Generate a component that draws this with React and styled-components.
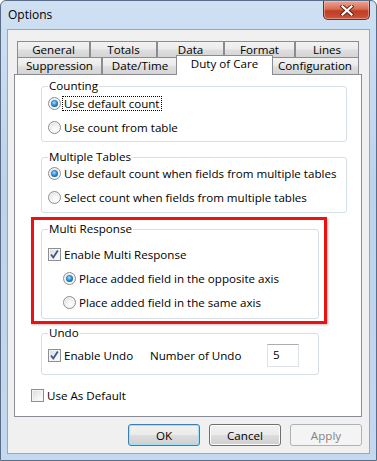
import React from "react";
import styled, { createGlobalStyle, css } from "styled-components";

const FS = "11.6px";

const GlobalStyle = createGlobalStyle`
  html, body { margin: 0; padding: 0; background: #ffffff; }
  body {
    font-family: "Segoe UI", "Open Sans", "Noto Sans", sans-serif;
    font-size: ${FS};
    color: #000;
  }
  * { box-sizing: border-box; }
`;

const Window = styled.div`
  width: 377px;
  height: 461px;
  border: 1px solid #5b6d86;
  border-radius: 6px 6px 0 0;
  background: linear-gradient(to bottom, #cfe0f3 0%, #bdd3ec 40%, #c4d8ef 100%);
  padding: 0 6px 6px 6px;
  display: flex;
  flex-direction: column;
`;

const TitleBar = styled.div`
  height: 28px;
  display: flex;
  align-items: flex-start;
  justify-content: space-between;
`;

const Title = styled.div`
  margin-top: 6px;
  padding-left: 1px;
  font-size: 12px;
  line-height: 16px;
  color: #000;
`;

const CloseButton = styled.div`
  width: 47px;
  height: 19px;
  border: 1px solid #6a2c22;
  border-top: none;
  border-radius: 0 0 5px 5px;
  background: linear-gradient(to bottom, #eaa694 0%, #d86c55 45%, #c13b22 55%, #c8573b 100%);
  box-shadow: inset 0 0 0 1px rgba(255, 210, 200, 0.45);
  display: flex;
  align-items: center;
  justify-content: center;
`;

const Client = styled.div`
  flex: 1;
  border: 1px solid #93a8c3;
  background: #f0f0f0;
  padding: 11px 0 0 6px;
`;

const TabArea = styled.div`
  width: 348px;
  display: flex;
  flex-direction: column;
`;

const TabRow = styled.div`
  display: flex;
  padding: 0 3px;
  height: ${(p) => p.$h}px;
`;

const Tab = styled.div`
  width: ${(p) => p.$w}px;
  height: 100%;
  border: 1px solid #898c95;
  border-bottom: none;
  background: linear-gradient(to bottom, #f3f3f3 0%, #ebebeb 45%, #dedede 55%, #d4d4d4 100%);
  display: flex;
  align-items: center;
  justify-content: center;
  font-size: ${FS};
  line-height: 14px;
  white-space: nowrap;
  ${(p) =>
    p.$selected &&
    css`
      position: relative;
      z-index: 1;
      width: ${p.$w + 4}px;
      height: calc(100% + 3px);
      margin: -2px -2px -1px -2px;
      background: #ffffff;
      align-items: flex-start;
      padding-top: 1px;
    `}
`;

const Panel = styled.div`
  height: 343px;
  border: 1px solid #898c95;
  background: #ffffff;
  display: flex;
  flex-direction: column;
  align-items: flex-start;
`;

const GroupBox = styled.fieldset`
  width: ${(p) => p.$w}px;
  margin: ${(p) => p.$mt || 0}px 0 0 ${(p) => p.$ml || 0}px;
  padding: ${(p) => p.$pt}px 6px ${(p) => p.$pb}px 6px;
  border: 1px solid #d5dfe5;
  border-radius: 3px;
  display: flex;
  flex-direction: column;
  gap: 8px;
  min-width: 0;
`;

const Legend = styled.legend`
  padding: 0 1px;
  margin: 0;
  font-size: ${FS};
  line-height: 14px;
`;

const OptionRow = styled.div`
  display: flex;
  align-items: center;
  height: ${(p) => p.$h || 16}px;
  margin-left: ${(p) => p.$indent || 0}px;
  font-size: ${FS};
  white-space: nowrap;
`;

const StandaloneRow = styled(OptionRow)`
  margin-top: 12px;
  margin-left: 16px;
`;

const Cell = styled.div`
  width: ${(p) => p.$w}px;
  flex: none;
  display: flex;
  align-items: center;
`;

const RadioMark = styled.span`
  position: relative;
  flex: none;
  width: 13px;
  height: 13px;
  border-radius: 50%;
  border: 1px solid #8d8d8d;
  background: radial-gradient(circle at 60% 65%, #ffffff 0%, #f2f2f2 40%, #d6d6d6 100%);
  box-shadow: inset 0 0 0 1px #f8f8f8;
  margin-right: 2px;
  ${(p) =>
    p.$checked &&
    css`
      &::after {
        content: "";
        position: absolute;
        left: 2px;
        top: 2px;
        width: 7px;
        height: 7px;
        border-radius: 50%;
        background: radial-gradient(circle at 45% 40%, #b8e4fb 0%, #3a9ee0 35%, #125a9e 75%, #0d3f73 100%);
      }
    `}
`;

const CheckBox = styled.span`
  flex: none;
  width: 13px;
  height: 13px;
  border: 1px solid #8e8f8f;
  background: linear-gradient(135deg, #d8d9db 0%, #f3f3f3 60%, #ffffff 100%);
  box-shadow: inset 0 0 0 1px #f4f4f4;
  margin-right: 2px;
  display: flex;
  align-items: center;
  justify-content: center;
`;

const Label = styled.span`
  padding: 0 1px;
  line-height: 13px;
  ${(p) =>
    p.$focus &&
    css`
      outline: 1px dotted #000;
      outline-offset: 0;
    `}
`;

const Highlight = styled.div`
  width: 296px;
  height: 107px;
  margin: 4px 0 0 16px;
  border: 3px solid #ee1111;
  box-shadow: 1px 1px 2px rgba(0, 0, 0, 0.25);
  padding: 2px 0 0 7px;
`;

const NumberField = styled.div`
  width: 32px;
  height: 23px;
  border: 1px solid #dde2e8;
  border-top-color: #abadb3;
  background: #ffffff;
  padding: 3px 0 0 5px;
  font-size: ${FS};
  line-height: 14px;
`;

const ButtonRow = styled.div`
  display: flex;
  justify-content: flex-end;
  gap: 9px;
  margin-top: 7px;
`;

const Button = styled.div`
  width: 72px;
  height: 22px;
  border: 1px solid #707070;
  border-radius: 3px;
  background: linear-gradient(to bottom, #f2f2f2 0%, #ebebeb 48%, #dddddd 52%, #cfcfcf 100%);
  box-shadow: inset 0 0 0 1px #fcfcfc;
  display: flex;
  align-items: center;
  justify-content: center;
  font-size: ${FS};
  color: #000;
  ${(p) =>
    p.$default &&
    css`
      border-color: #3c7fb1;
      box-shadow: inset 0 0 0 1px #9fe0f8;
    `}
  ${(p) =>
    p.$disabled &&
    css`
      border-color: #adb2b5;
      background: #f4f4f4;
      box-shadow: none;
      color: #838383;
    `}
`;

const CloseIcon = () => (
  <svg width="14" height="11" viewBox="0 0 14 11">
    <path d="M2.5 1.5 L11.5 9.5 M11.5 1.5 L2.5 9.5" stroke="#5a2217" strokeWidth="4" strokeLinecap="square" fill="none" />
    <path d="M2.5 1.5 L11.5 9.5 M11.5 1.5 L2.5 9.5" stroke="#ffffff" strokeWidth="2.2" strokeLinecap="square" fill="none" />
  </svg>
);

const Check = () => (
  <svg width="11" height="11" viewBox="0 0 11 11">
    <path d="M2 5.5 L4.3 8.5 L8.8 1.5" stroke="#3b5594" strokeWidth="1.8" fill="none" />
  </svg>
);

const Radio = ({ checked, focus, indent, children }) => (
  <OptionRow $indent={indent}>
    <RadioMark $checked={checked} />
    <Label $focus={focus}>{children}</Label>
  </OptionRow>
);

const Checkbox = ({ checked, children }) => (
  <>
    <CheckBox>{checked && <Check />}</CheckBox>
    <Label>{children}</Label>
  </>
);

const row1 = [
  ["General", 73],
  ["Totals", 67],
  ["Data", 67],
  ["Format", 71],
  ["Lines", 64],
];
const row2 = [
  ["Suppression", 85],
  ["Date/Time", 76],
  ["Duty of Care", 93, true],
  ["Configuration", 88],
];

export default function App() {
  return (
    <>
      <GlobalStyle />
      <Window>
        <TitleBar>
          <Title>Options</Title>
          <CloseButton>
            <CloseIcon />
          </CloseButton>
        </TitleBar>
        <Client>
          <TabArea>
            <TabRow $h={16}>
              {row1.map(([t, w]) => (
                <Tab key={t} $w={w}>{t}</Tab>
              ))}
            </TabRow>
            <TabRow $h={17}>
              {row2.map(([t, w, s]) => (
                <Tab key={t} $w={w} $selected={s}>{t}</Tab>
              ))}
            </TabRow>
            <Panel>
              <GroupBox $w={306} $ml={26} $mt={4} $pt={2} $pb={6}>
                <Legend>Counting</Legend>
                <Radio checked focus>Use default count</Radio>
                <Radio>Use count from table</Radio>
              </GroupBox>
              <GroupBox $w={306} $ml={26} $mt={8} $pt={1} $pb={7}>
                <Legend>Multiple Tables</Legend>
                <Radio checked>Use default count when fields from multiple tables</Radio>
                <Radio>Select count when fields from multiple tables</Radio>
              </GroupBox>
              <Highlight>
                <GroupBox $w={278} $pt={10} $pb={8}>
                  <Legend>Multi Response</Legend>
                  <OptionRow>
                    <Checkbox checked>Enable Multi Response</Checkbox>
                  </OptionRow>
                  <Radio checked indent={15}>Place added field in the opposite axis</Radio>
                  <Radio indent={15}>Place added field in the same axis</Radio>
                </GroupBox>
              </Highlight>
              <GroupBox $w={278} $ml={26} $mt={2} $pt={4} $pb={7}>
                <Legend>Undo</Legend>
                <OptionRow $h={23}>
                  <Cell $w={101}>
                    <Checkbox checked>Enable Undo</Checkbox>
                  </Cell>
                  <Cell $w={118}>
                    <Label>Number of Undo</Label>
                  </Cell>
                  <NumberField>5</NumberField>
                </OptionRow>
              </GroupBox>
              <StandaloneRow>
                <Checkbox>Use As Default</Checkbox>
              </StandaloneRow>
            </Panel>
            <ButtonRow>
              <Button $default>OK</Button>
              <Button>Cancel</Button>
              <Button $disabled>Apply</Button>
            </ButtonRow>
          </TabArea>
        </Client>
      </Window>
    </>
  );
}
